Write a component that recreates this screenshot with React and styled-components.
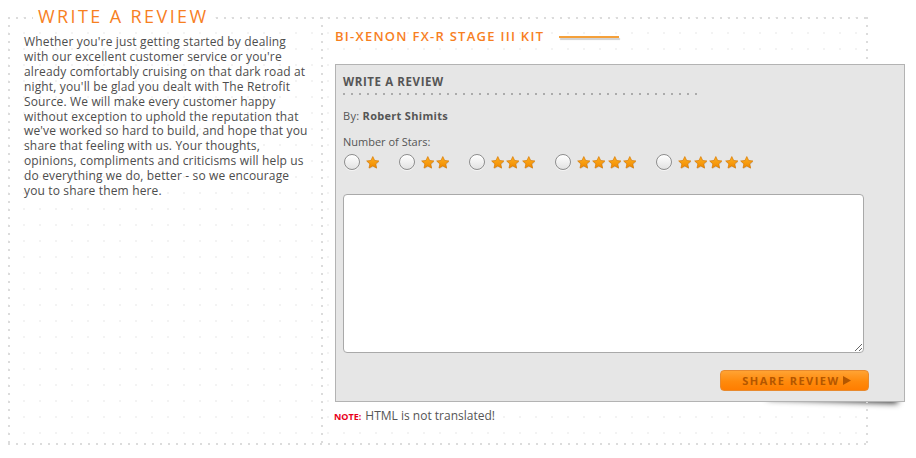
import React from "react";
import styled, { createGlobalStyle } from "styled-components";

const GlobalStyle = createGlobalStyle`
  body {
    margin: 8px;
    background: #fff;
    font-family: "Open Sans", Lato, Arial, sans-serif;
    color: #4d4d4d;
  }
`;

const ORANGE = "#f7801f";
const DOT = "#dcdcdc";

const Frame = styled.div`
  position: relative;
  margin-top: 9px;
  width: 860px;
  height: 428px;
  display: flex;
  background:
    linear-gradient(90deg, ${DOT} 2px, transparent 2px) 0 0 / 8px 2px repeat-x,
    linear-gradient(90deg, ${DOT} 2px, transparent 2px) 0 100% / 8px 2px repeat-x,
    linear-gradient(${DOT} 2px, transparent 2px) 0 0 / 2px 8px repeat-y,
    linear-gradient(${DOT} 2px, transparent 2px) 100% 0 / 2px 8px repeat-y,
    radial-gradient(circle, #f3f3f3 0.8px, transparent 1.2px) 8px 8px / 16px 16px;
`;

const Legend = styled.h1`
  position: absolute;
  top: -11px;
  left: 25px;
  margin: 0;
  padding: 0 4px 0 5px;
  background: #fff;
  font-size: 18px;
  line-height: 20px;
  font-weight: 400;
  letter-spacing: 2.4px;
  color: ${ORANGE};
  text-transform: uppercase;
`;

const LeftCol = styled.div`
  width: 315px;
  flex: none;
  box-sizing: border-box;
  padding: 18px 14px 0 16px;
  background: linear-gradient(${DOT} 2px, transparent 2px) 100% 0 / 2px 8px repeat-y;
`;

const Intro = styled.p`
  margin: 0;
  width: 284px;
  font-size: 12px;
  line-height: 14.9px;
  letter-spacing: 0.15px;
  color: #4d4d4d;
`;

const RightCol = styled.div`
  flex: 1;
  padding: 10px 0 0 12px;
`;

const TitleRow = styled.div`
  display: flex;
  align-items: center;
  gap: 15px;
  height: 18px;
  margin-bottom: 19px;
`;

const ProductTitle = styled.h2`
  margin: 0;
  font-size: 13px;
  line-height: 18px;
  font-weight: 600;
  letter-spacing: 1.27px;
  color: ${ORANGE};
  text-transform: uppercase;
`;

const TitleRule = styled.span`
  display: block;
  width: 60px;
  height: 2px;
  margin-top: 1px;
  background: #f4a03a;
  box-shadow: 1px 2px 1px #cfcfcf;
`;

const ReviewBox = styled.div`
  position: relative;
  width: 570px;
  box-sizing: border-box;
  padding: 10px 7px 10px 7px;
  background: #e6e6e6;
  border: 1px solid #b3b3b3;

  &::after {
    content: "";
    position: absolute;
    z-index: -1;
    right: 6px;
    bottom: 6px;
    width: 130px;
    height: 12px;
    box-shadow: 0 6px 6px rgba(0, 0, 0, 0.85);
    transform: rotate(2deg);
  }
`;

const BoxHeading = styled.h3`
  margin: 0;
  width: 360px;
  padding-bottom: 6px;
  font-size: 11.5px;
  line-height: 14px;
  font-weight: 700;
  letter-spacing: 0.6px;
  color: #555;
  text-transform: uppercase;
  background: linear-gradient(90deg, #ababab 2px, transparent 2px) 0 100% / 8px 2px repeat-x;
`;

const Line = styled.div`
  margin-top: ${(p) => p.$top}px;
  font-size: 11px;
  line-height: 14px;
  letter-spacing: ${(p) => p.$spacing || 0}px;
  color: #555;

  b {
    font-weight: 700;
  }
`;

const StarsRow = styled.div`
  display: flex;
  align-items: center;
  margin-top: 5px;
  height: 16px;
`;

const Option = styled.label`
  display: inline-flex;
  align-items: center;
  gap: 5px;
  margin-right: 17px;
`;

const Radio = styled.input.attrs({ type: "radio", name: "stars" })`
  appearance: none;
  margin: 0 0 0 1px;
  width: 16px;
  height: 16px;
  box-sizing: border-box;
  border-radius: 50%;
  border: 1px solid #8d8d8d;
  background: linear-gradient(#ffffff, #e2e2e2);
  box-shadow: inset 0 1px 1px #fff, 0 1px 0 rgba(255, 255, 255, 0.6);
`;

const Stars = styled.span`
  display: inline-flex;
`;

const TextArea = styled.textarea`
  display: block;
  margin-top: 24px;
  width: 521px;
  height: 159px;
  box-sizing: border-box;
  border: 1px solid #a9a9a9;
  border-radius: 4px;
  background: #fff;
  font-family: "Open Sans", Arial, sans-serif;
  font-size: 12px;
  padding: 4px;
`;

const ButtonRow = styled.div`
  display: flex;
  margin-top: 17px;
  padding-left: 377px;
`;

const ShareButton = styled.button`
  display: inline-flex;
  align-items: center;
  justify-content: center;
  gap: 3px;
  width: 149px;
  height: 21px;
  padding: 0 0 0 4px;
  box-sizing: border-box;
  border: 1px solid #e88a2e;
  border-radius: 4px;
  background: linear-gradient(#ffa333, #ff8a0c 55%, #ff7d00);
  color: #b35600;
  font-family: "Open Sans", Arial, sans-serif;
  font-size: 11px;
  font-weight: 700;
  letter-spacing: 1.5px;
  text-transform: uppercase;
  cursor: pointer;
`;

const Note = styled.p`
  margin: 7px 0 0 -1px;
  font-size: 12px;
  line-height: 14px;
  color: #555;
`;

const NoteLabel = styled.span`
  font-size: 9px;
  font-weight: 700;
  color: #e8001c;
  margin-right: 4px;
`;

function Star() {
  return (
    <svg width="15.6" height="15" viewBox="0 0 16 15">
      <defs>
        <linearGradient id="sg" x1="0" y1="0" x2="0" y2="1">
          <stop offset="0" stopColor="#ffb020" />
          <stop offset="1" stopColor="#f08a00" />
        </linearGradient>
      </defs>
      <path
        d="M8 1.4l1.9 4 4.4.5-3.3 3 .9 4.3L8 11l-3.9 2.2.9-4.3-3.3-3 4.4-.5z"
        fill="#bbb"
        opacity="0.6"
        transform="translate(0.4 1)"
      />
      <path
        d="M8 1.4l1.9 4 4.4.5-3.3 3 .9 4.3L8 11l-3.9 2.2.9-4.3-3.3-3 4.4-.5z"
        fill="url(#sg)"
        stroke="#d77800"
        strokeWidth="0.7"
        strokeLinejoin="round"
      />
    </svg>
  );
}

const intro =
  "Whether you're just getting started by dealing with our excellent customer service or you're already comfortably cruising on that dark road at night, you'll be glad you dealt with The Retrofit Source. We will make every customer happy without exception to uphold the reputation that we've worked so hard to build, and hope that you share that feeling with us. Your thoughts, opinions, compliments and criticisms will help us do everything we do, better - so we encourage you to share them here.";

export default function App() {
  return (
    <>
      <GlobalStyle />
      <Frame>
        <Legend>Write a Review</Legend>
        <LeftCol>
          <Intro>{intro}</Intro>
        </LeftCol>
        <RightCol>
          <TitleRow>
            <ProductTitle>Bi-Xenon FX-R Stage III Kit</ProductTitle>
            <TitleRule />
          </TitleRow>
          <ReviewBox>
            <BoxHeading>Write a Review</BoxHeading>
            <Line $top={14} $spacing={0.3}>
              By: <b>Robert Shimits</b>
            </Line>
            <Line $top={12}>Number of Stars:</Line>
            <StarsRow>
              {[1, 2, 3, 4, 5].map((n) => (
                <Option key={n}>
                  <Radio value={n} />
                  <Stars>
                    {Array.from({ length: n }).map((_, i) => (
                      <Star key={i} />
                    ))}
                  </Stars>
                </Option>
              ))}
            </StarsRow>
            <TextArea />
            <ButtonRow>
              <ShareButton>
                Share Review
                <svg width="8" height="9" viewBox="0 0 8 9">
                  <path d="M0 0l8 4.5L0 9z" fill="#b35600" />
                </svg>
              </ShareButton>
            </ButtonRow>
          </ReviewBox>
          <Note>
            <NoteLabel>NOTE:</NoteLabel>HTML is not translated!
          </Note>
        </RightCol>
      </Frame>
    </>
  );
}
